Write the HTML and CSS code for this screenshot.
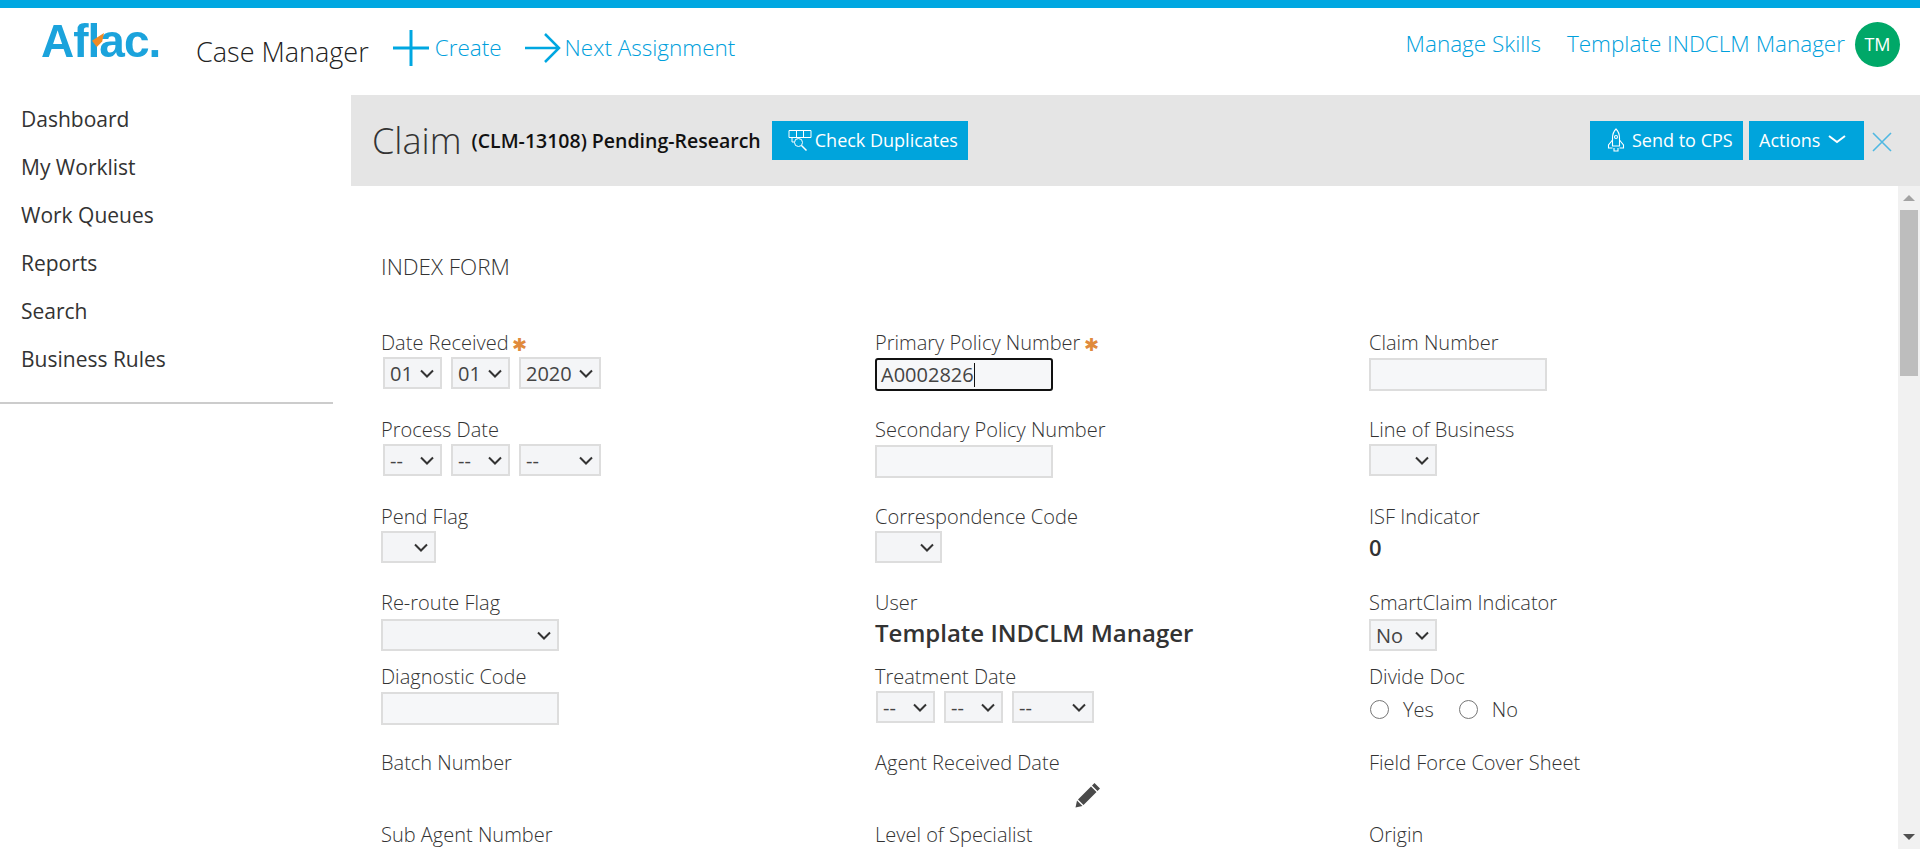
FILE: index.html
```html
<!DOCTYPE html>
<html lang="en">
<head>
    <meta charset="UTF-8">
    <meta name="viewport" content="width=device-width, initial-scale=1.0">
    <title>Case Manager</title>
    <link rel="stylesheet" href="styles.css">
</head>
<body>
    <header class="topbar">
        <div class="logo">Aflac.<span class="logo-beak"></span></div>
        <div class="app-name">Case Manager</div>
        <a class="top-link create-link">
            <svg width="36" height="36" viewBox="0 0 36 36"><path d="M18 0V36M0 18H36" fill="none" stroke="#00a7e1" stroke-width="3"/></svg>
            Create
        </a>
        <a class="top-link next-link">
            <svg width="36" height="30" viewBox="0 0 36 30"><path d="M0 15H34M20 1L34 15L20 29" fill="none" stroke="#00a7e1" stroke-width="2.5"/></svg>
            Next Assignment
        </a>
        <div class="top-right">
            <a class="top-link">Manage Skills</a>
            <a class="top-link">Template INDCLM Manager</a>
            <div class="avatar">TM</div>
        </div>
    </header>

    <div class="layout">
        <nav class="sidebar">
            <ul>
                <li>Dashboard</li>
                <li>My Worklist</li>
                <li>Work Queues</li>
                <li>Reports</li>
                <li>Search</li>
                <li>Business Rules</li>
            </ul>
        </nav>

        <main class="main">
            <div class="claim-bar">
                <span class="claim-title">Claim</span>
                <span class="claim-status">(CLM-13108) Pending-Research</span>
                <button class="btn dup-btn">
                    <svg width="24" height="22" viewBox="0 0 24 22" fill="none" stroke="#fff" stroke-width="1"><path d="M1 1.5H23V8.5H1ZM8.5 1.5V8.5M15.5 1.5V8.5M4 8.5V13H6.5"/><circle cx="10.5" cy="13.5" r="4"/><path d="M13.5 16.5L18.5 21.5" stroke-width="1.5"/></svg>
                    Check Duplicates
                </button>
                <div class="claim-actions">
                    <button class="btn send-btn">
                        <svg width="18" height="24" viewBox="0 0 18 24" fill="none" stroke="#fff" stroke-width="1.1"><path d="M9 1C6 4 5.5 7 5.5 10V18H12.5V10C12.5 7 12 4 9 1Z"/><path d="M5.5 12L1.5 17V20H5.5M12.5 12L16.5 17V20H12.5"/><circle cx="9" cy="9" r="1.5"/><path d="M7 20V23H11V20"/></svg>
                        Send to CPS
                    </button>
                    <button class="btn actions-btn">
                        Actions
                        <svg width="18" height="9" viewBox="0 0 18 9"><path d="M1 1L9 7L17 1" fill="none" stroke="#fff" stroke-width="2"/></svg>
                    </button>
                    <svg class="close-x" width="20" height="20" viewBox="0 0 20 20"><path d="M1 1L19 19M19 1L1 19" fill="none" stroke="#4fb8e2" stroke-width="1.6"/></svg>
                </div>
            </div>

            <div class="content">
                <div class="form-pane">
                    <h2 class="form-title">INDEX FORM</h2>

                    <div class="row row-1">
                        <div class="field">
                            <label>Date Received <span class="req">&#10033;</span></label>
                            <div class="date-group">
                                <select class="sel-day"><option>01</option></select>
                                <select class="sel-day"><option>01</option></select>
                                <select class="sel-year"><option>2020</option></select>
                            </div>
                        </div>
                        <div class="field">
                            <label>Primary Policy Number <span class="req">&#10033;</span></label>
                            <div class="input-fake focused">A0002826<span class="caret"></span></div>
                        </div>
                        <div class="field">
                            <label>Claim Number</label>
                            <input type="text">
                        </div>
                    </div>

                    <div class="row row-2">
                        <div class="field">
                            <label>Process Date</label>
                            <div class="date-group">
                                <select class="sel-day"><option>--</option></select>
                                <select class="sel-day"><option>--</option></select>
                                <select class="sel-year"><option>--</option></select>
                            </div>
                        </div>
                        <div class="field">
                            <label>Secondary Policy Number</label>
                            <input type="text">
                        </div>
                        <div class="field">
                            <label>Line of Business</label>
                            <select class="sel-lob"><option></option></select>
                        </div>
                    </div>

                    <div class="row row-3">
                        <div class="field">
                            <label>Pend Flag</label>
                            <select class="sel-pend"><option></option></select>
                        </div>
                        <div class="field">
                            <label>Correspondence Code</label>
                            <select class="sel-corr"><option></option></select>
                        </div>
                        <div class="field">
                            <label>ISF Indicator</label>
                            <div class="value">0</div>
                        </div>
                    </div>

                    <div class="row row-4">
                        <div class="field">
                            <label>Re-route Flag</label>
                            <select class="sel-wide"><option></option></select>
                        </div>
                        <div class="field">
                            <label>User</label>
                            <div class="value user-value">Template INDCLM Manager</div>
                        </div>
                        <div class="field">
                            <label>SmartClaim Indicator</label>
                            <select class="sel-lob"><option>No</option></select>
                        </div>
                    </div>

                    <div class="row row-5">
                        <div class="field">
                            <label>Diagnostic Code</label>
                            <input type="text">
                        </div>
                        <div class="field">
                            <label>Treatment Date</label>
                            <div class="date-group">
                                <select class="sel-day"><option>--</option></select>
                                <select class="sel-day"><option>--</option></select>
                                <select class="sel-year"><option>--</option></select>
                            </div>
                        </div>
                        <div class="field">
                            <label>Divide Doc</label>
                            <div class="radio-group">
                                <span class="radio"></span><span class="radio-label">Yes</span>
                                <span class="radio"></span><span class="radio-label">No</span>
                            </div>
                        </div>
                    </div>

                    <div class="row row-6">
                        <div class="field">
                            <label>Batch Number</label>
                        </div>
                        <div class="field">
                            <label>Agent Received Date</label>
                            <svg class="pencil" width="26" height="26" viewBox="0 0 26 26"><path d="M19.5 1L25 6.5L22.5 9L17 3.5ZM16 4.5L21.5 10L8.5 23L3 17.5ZM2 18.5L7.5 24L0.5 25.5Z" fill="#4a4a4a"/></svg>
                        </div>
                        <div class="field">
                            <label>Field Force Cover Sheet</label>
                        </div>
                    </div>

                    <div class="row">
                        <div class="field"><label>Sub Agent Number</label></div>
                        <div class="field"><label>Level of Specialist</label></div>
                        <div class="field"><label>Origin</label></div>
                    </div>
                </div>

                <div class="scrollbar">
                    <div class="scroll-up"></div>
                    <div class="scroll-thumb"></div>
                    <div class="scroll-track"></div>
                    <div class="scroll-down"></div>
                </div>
            </div>
        </main>
    </div>
</body>
</html>
```

FILE: styles.css
```css
* {
    box-sizing: border-box;
}

html, body {
    height: 100%;
}

body {
    margin: 0;
    overflow: hidden;
    display: flex;
    flex-direction: column;
    font-family: "Open Sans", sans-serif;
    color: #333;
    background: #fff;
}

.topbar {
    height: 95px;
    flex: none;
    display: flex;
    align-items: flex-start;
    border-top: 8px solid #00a7e1;
    padding-left: 41px;
}

.logo {
    position: relative;
    width: 155px;
    margin-top: 8px;
    font-family: "Liberation Sans", sans-serif;
    font-size: 46px;
    font-weight: bold;
    line-height: 50px;
    letter-spacing: -1px;
    color: #1ba3dc;
    filter: blur(0.6px);
}

.logo-beak {
    position: absolute;
    left: 51px;
    top: 17px;
    width: 12px;
    height: 14px;
    background: #f08a24;
    clip-path: polygon(0 55%, 100% 0, 85% 60%, 40% 100%);
}

.app-name {
    margin-top: 26px;
    font-size: 27px;
    font-weight: 300;
    line-height: 36px;
    color: #222;
}

.top-link {
    display: flex;
    align-items: center;
    font-size: 22.5px;
    font-weight: 300;
    line-height: 30px;
    color: #00a0dc;
}

.create-link {
    margin: 22px 0 0 24px;
    gap: 6px;
}

.next-link {
    margin: 25px 0 0 23px;
    gap: 4px;
}

.top-right {
    margin-left: auto;
    padding-right: 20px;
    margin-top: 14px;
    display: flex;
    align-items: center;
    gap: 26px;
}

.top-right .top-link {
    margin-bottom: 2px;
}

.avatar {
    width: 45px;
    height: 45px;
    margin-left: -16px;
    border-radius: 50%;
    background: #00a868;
    color: #fff;
    font-size: 18px;
    line-height: 45px;
    text-align: center;
}

.layout {
    flex: 1;
    min-height: 0;
    display: flex;
}

.sidebar {
    width: 351px;
    flex: none;
}

.sidebar ul {
    list-style: none;
    margin: 0;
    padding: 0 0 19px 21px;
    width: 333px;
    border-bottom: 2px solid #ccc;
}

.sidebar li {
    height: 48px;
    font-size: 21px;
    line-height: 48px;
    color: #333;
}

.main {
    flex: 1;
    min-width: 0;
    display: flex;
    flex-direction: column;
}

.claim-bar {
    height: 91px;
    flex: none;
    display: flex;
    align-items: center;
    padding: 0 28px 0 21px;
    background: #e5e5e5;
}

.claim-title {
    font-size: 36px;
    font-weight: 300;
    color: #333;
}

.claim-status {
    margin-left: 10px;
    font-size: 19.5px;
    font-weight: 600;
    color: #111;
}

.btn {
    display: flex;
    align-items: center;
    height: 39px;
    border: none;
    padding: 0 10px 2px;
    background: #00a4dc;
    color: #fff;
    font-family: inherit;
    font-size: 18px;
    white-space: nowrap;
}

.dup-btn {
    margin-left: 11px;
    width: 196px;
    gap: 3px;
    padding-left: 16px;
    padding-right: 0;
}

.claim-actions {
    margin-left: auto;
    display: flex;
    align-items: center;
}

.send-btn {
    width: 153px;
    gap: 7px;
    padding-left: 17px;
}

.actions-btn {
    width: 115px;
    margin-left: 6px;
    gap: 8px;
}

.close-x {
    margin: 2px 0 0 8px;
}

.content {
    flex: 1;
    min-height: 0;
    display: flex;
}

.form-pane {
    flex: 1;
    min-width: 0;
    overflow: hidden;
    padding: 69px 0 0 30px;
}

.form-title {
    margin: 0 0 49px;
    font-size: 22.4px;
    font-weight: 300;
    line-height: 24px;
    color: #333;
}

.row {
    display: grid;
    grid-template-columns: 494px 494px 494px;
}

.row-1, .row-2 { height: 87px; }
.row-3 { height: 86px; }
.row-4 { height: 74px; }
.row-5 { height: 86px; }
.row-6 { height: 72px; }

.row-4 select {
    margin-top: 2px;
}

.row-5 .date-group {
    padding-left: 1px;
}

.field label {
    display: block;
    font-size: 20px;
    font-weight: 300;
    line-height: 29px;
    color: #333;
}

.req {
    position: relative;
    top: 1px;
    margin-left: -2px;
    font-size: 18px;
    line-height: 1;
    color: #e08a3c;
}

.date-group {
    display: flex;
    gap: 9px;
    padding-left: 2px;
}

select {
    display: block;
    height: 32px;
    padding: 0 0 0 5px;
    border: 2px solid #ddd;
    border-radius: 0;
    appearance: none;
    background: #f4f5f7 url("data:image/svg+xml,%3Csvg xmlns='http://www.w3.org/2000/svg' width='14' height='9' viewBox='0 0 14 9'%3E%3Cpath d='M1 1.5L7 7.5L13 1.5' fill='none' stroke='%23333' stroke-width='2'/%3E%3C/svg%3E") no-repeat right 6px center;
    font-family: inherit;
    font-size: 20px;
    color: #444;
}

.sel-day { width: 59px; }
.sel-year { width: 82px; }
.sel-lob { width: 68px; }
.sel-pend { width: 55px; }
.sel-corr { width: 67px; }
.sel-wide { width: 178px; }

input, .input-fake {
    display: block;
    width: 178px;
    height: 33px;
    margin-top: 1px;
    border: 2px solid #ddd;
    background: #f6f7f9;
    font-family: inherit;
    font-size: 20px;
}

.input-fake {
    display: flex;
    align-items: center;
    padding-left: 4px;
    border-color: #111;
    border-radius: 3px;
    color: #444;
}

.caret {
    width: 1px;
    height: 24px;
    background: #111;
}

.value {
    font-size: 22px;
    font-weight: 600;
    line-height: 32px;
    color: #333;
}

.user-value {
    font-size: 24px;
}

.radio-group {
    display: flex;
    align-items: center;
    height: 36px;
    padding-left: 1px;
}

.radio {
    width: 19px;
    height: 19px;
    border: 1px solid #767676;
    border-radius: 50%;
}

.radio-label {
    margin: 0 25px 0 14px;
    font-size: 20px;
    font-weight: 300;
    color: #333;
}

.pencil {
    display: block;
    margin: 5px 0 0 200px;
}

.scrollbar {
    width: 22px;
    flex: none;
    display: flex;
    flex-direction: column;
    background: #f1f1f1;
}

.scroll-up, .scroll-down {
    height: 24px;
    flex: none;
    display: flex;
    justify-content: center;
    align-items: center;
}

.scroll-up::after {
    content: "";
    border: 6px solid transparent;
    border-top: none;
    border-bottom: 6px solid #a3a3a3;
}

.scroll-down::after {
    content: "";
    border: 6px solid transparent;
    border-bottom: none;
    border-top: 6px solid #505050;
}

.scroll-thumb {
    height: 166px;
    flex: none;
    margin: 0 2px;
    background: #bdbdbd;
}

.scroll-track {
    flex: 1;
}
```
